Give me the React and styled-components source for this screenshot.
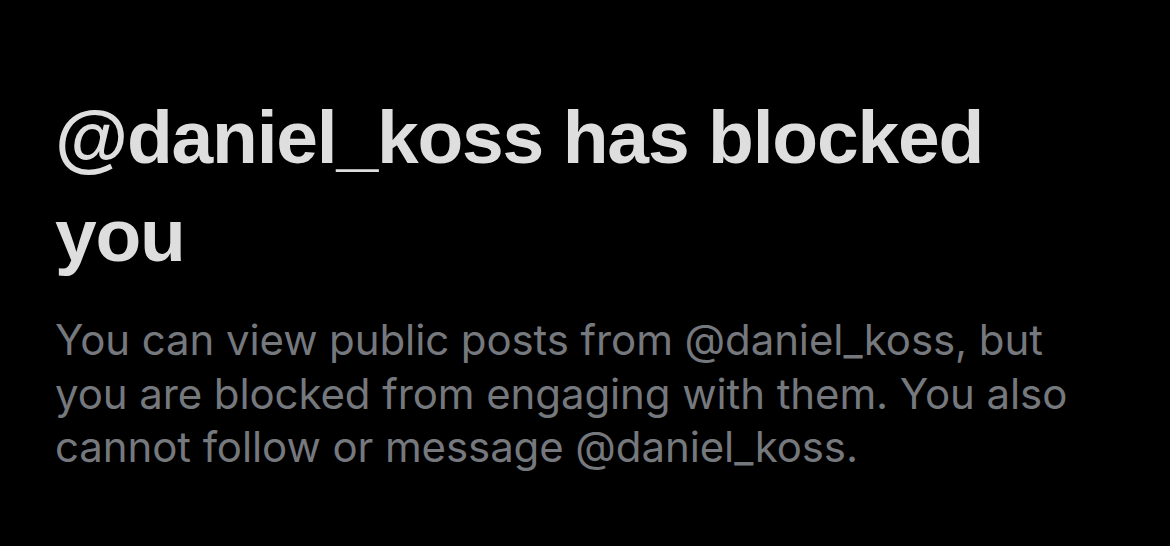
import React from "react";
import styled, { createGlobalStyle } from "styled-components";

const GlobalStyle = createGlobalStyle`
  html, body {
    margin: 0;
    padding: 0;
    background: #000;
  }
`;

const Screen = styled.div`
  width: 1170px;
  height: 546px;
  background: #000;
  box-sizing: border-box;
  padding: 88px 0 0 55px;
  overflow: hidden;
`;

const Notice = styled.div`
  display: flex;
  flex-direction: column;
  gap: 29px;
  width: 1040px;
`;

const Title = styled.h1`
  margin: 0;
  font-family: "Liberation Sans", Arial, sans-serif;
  font-weight: 700;
  font-size: 75px;
  line-height: 98px;
  letter-spacing: -1.2px;
  color: #dedede;
`;

const Body = styled.p`
  margin: 0;
  font-family: Inter, "Noto Sans", sans-serif;
  font-weight: 400;
  font-size: 42px;
  line-height: 53.5px;
  letter-spacing: -0.1px;
  color: #75787d;
`;

function App() {
  return (
    <Screen>
      <GlobalStyle />
      <Notice>
        <Title>@daniel_koss has blocked you</Title>
        <Body>
          You can view public posts from @daniel_koss, but you are blocked
          from engaging with them. You also cannot follow or message
          @daniel_koss.
        </Body>
      </Notice>
    </Screen>
  );
}

export default App;
